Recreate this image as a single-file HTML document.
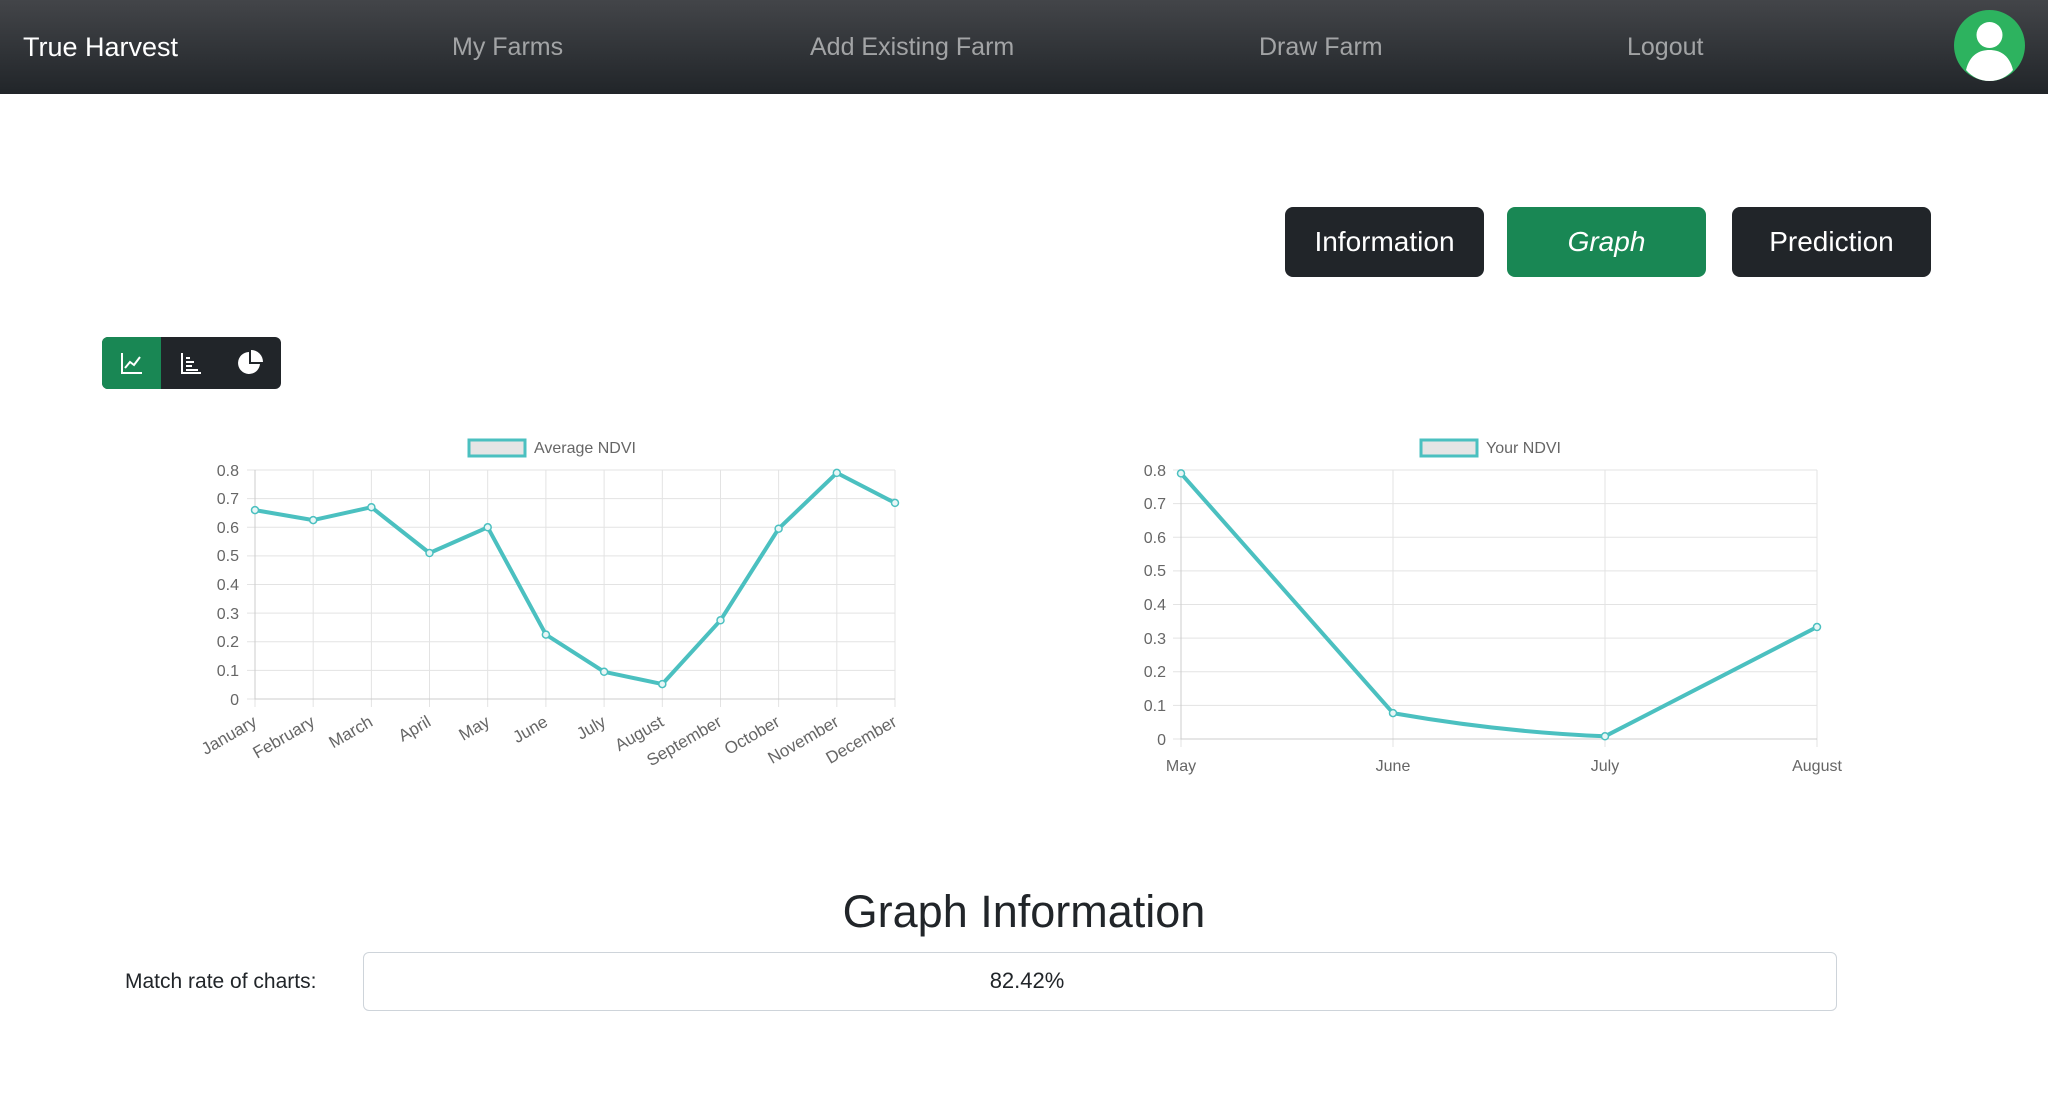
<!DOCTYPE html>
<html><head><meta charset="utf-8"><style>
*{margin:0;padding:0;box-sizing:border-box}
body{width:2048px;height:1104px;background:#fff;font-family:"Liberation Sans",sans-serif;position:relative;overflow:hidden;color:#212529}
.nav{position:absolute;left:0;top:0;width:2048px;height:94px;background:linear-gradient(#434549,#212529)}
.nav span{position:absolute;top:33px;font-size:25px;color:rgba(255,255,255,.55)}
.brand{left:23px;color:#fff!important;font-size:27px!important;top:32px!important}
.btn{position:absolute;top:207px;height:70px;width:199px;border-radius:8px;background:#212529;color:#fff;font-size:28px;display:flex;align-items:center;justify-content:center}
.grp{position:absolute;left:102px;top:337px;width:179px;height:52px;border-radius:6px;background:#212529;overflow:hidden}
.grp div{position:absolute;top:0;width:59px;height:52px;display:flex;align-items:center;justify-content:center}
.lbl{font-size:21px;position:absolute}
</style></head><body>
<div class="nav">
<span class="brand">True Harvest</span>
<span style="left:452px">My Farms</span>
<span style="left:810px">Add Existing Farm</span>
<span style="left:1259px">Draw Farm</span>
<span style="left:1627px">Logout</span>
<svg style="position:absolute;left:1954px;top:10px" width="71" height="71" viewBox="0 0 71 71"><circle cx="35.5" cy="35.5" r="35.5" fill="#2db35f"/><circle cx="35.5" cy="25" r="13" fill="#fff"/><path d="M12 60 C16 44 26 40 35.5 40 C45 40 55 44 59 60 C53 67 45 71 35.5 71 C26 71 18 67 12 60Z" fill="#fff"/></svg>
</div>
<div class="btn" style="left:1285px">Information</div>
<div class="btn" style="left:1507px;background:#198754;font-style:italic">Graph</div>
<div class="btn" style="left:1732px">Prediction</div>
<div class="grp">
<div style="left:0;background:#198754"><svg width="24" height="24" viewBox="0 0 24 24" fill="none" stroke="#fff" stroke-width="2"><path d="M2 2V22H22"/><path d="M5 17L10 11L14 14L20 6"/></svg></div>
<div style="left:59px"><svg width="24" height="24" viewBox="0 0 24 24" fill="none" stroke="#fff" stroke-width="2"><path d="M3 2V22H22"/><path d="M7 7H11M7 11H15M7 15H13M7 19H19"/></svg></div>
<div style="left:118px"><svg width="26" height="26" viewBox="0 0 26 26"><path d="M12 2A11 11 0 1 0 23 14H12Z" fill="#fff"/><path d="M14 0V12H26A12 12 0 0 0 14 0Z" fill="#fff"/></svg></div>
</div>
<svg style="position:absolute;left:0;top:0" width="2048" height="1104" font-family="Liberation Sans" font-size="16" fill="#666">
<g stroke="#e3e3e3" stroke-width="1">
<path d="M247 699H895M247 670.4H895M247 641.75H895M247 613.1H895M247 584.5H895M247 555.9H895M247 527.25H895M247 498.6H895M247 470H895"/>
<path d="M255 470V707M313.2 470V707M371.4 470V707M429.5 470V707M487.7 470V707M545.9 470V707M604.1 470V707M662.3 470V707M720.5 470V707M778.6 470V707M836.8 470V707M895 470V707"/>
<path d="M1173 739H1817M1173 705.4H1817M1173 671.75H1817M1173 638.1H1817M1173 604.5H1817M1173 570.9H1817M1173 537.25H1817M1173 503.6H1817M1173 470H1817"/>
<path d="M1181 470V747M1393 470V747M1605 470V747M1817 470V747"/>
</g>
<path d="M255 470V699H895" stroke="#ccc" fill="none"/>
<path d="M1181 470V739H1817" stroke="#ccc" fill="none"/>
<g text-anchor="end">
<text x="239" y="705">0</text><text x="239" y="676">0.1</text><text x="239" y="647">0.2</text><text x="239" y="619">0.3</text><text x="239" y="590">0.4</text><text x="239" y="561">0.5</text><text x="239" y="533">0.6</text><text x="239" y="504">0.7</text><text x="239" y="476">0.8</text>
<text x="1166" y="745">0</text><text x="1166" y="711">0.1</text><text x="1166" y="677">0.2</text><text x="1166" y="644">0.3</text><text x="1166" y="610">0.4</text><text x="1166" y="576">0.5</text><text x="1166" y="543">0.6</text><text x="1166" y="509">0.7</text><text x="1166" y="476">0.8</text>
<g font-size="17">
<text transform="translate(258,725) rotate(-30)">January</text>
<text transform="translate(316,725) rotate(-30)">February</text>
<text transform="translate(374,725) rotate(-30)">March</text>
<text transform="translate(432,725) rotate(-30)">April</text>
<text transform="translate(491,725) rotate(-30)">May</text>
<text transform="translate(549,725) rotate(-30)">June</text>
<text transform="translate(607,725) rotate(-30)">July</text>
<text transform="translate(665,725) rotate(-30)">August</text>
<text transform="translate(723,725) rotate(-30)">September</text>
<text transform="translate(781,725) rotate(-30)">October</text>
<text transform="translate(840,725) rotate(-30)">November</text>
<text transform="translate(898,725) rotate(-30)">December</text>
</g>
</g>
<g text-anchor="middle"><text x="1181" y="771">May</text><text x="1393" y="771">June</text><text x="1605" y="771">July</text><text x="1817" y="771">August</text></g>
<rect x="469" y="440" width="56" height="16" fill="#e5e5e5" stroke="#4bc0c0" stroke-width="3"/>
<text x="534" y="453">Average NDVI</text>
<rect x="1421" y="440" width="56" height="16" fill="#e5e5e5" stroke="#4bc0c0" stroke-width="3"/>
<text x="1486" y="453">Your NDVI</text>
<g fill="none" stroke="#4bc0c0" stroke-width="4" stroke-linejoin="round">
<path d="M255 510.1L313.2 520.1L371.4 507.2L429.5 553L487.7 527.3L545.9 634.6L604.1 671.8L662.3 684.1L720.5 620.3L778.6 528.7L836.8 472.9L895 502.9"/>
<path d="M1181 473.4L1393 713.1Q1500 732 1605 736.3L1817 627"/>
</g>
<g fill="#e8f6f6" stroke="#4bc0c0" stroke-width="1.5">
<circle cx="255" cy="510.1" r="3.5"/><circle cx="313.2" cy="520.1" r="3.5"/><circle cx="371.4" cy="507.2" r="3.5"/><circle cx="429.5" cy="553" r="3.5"/><circle cx="487.7" cy="527.3" r="3.5"/><circle cx="545.9" cy="634.6" r="3.5"/><circle cx="604.1" cy="671.8" r="3.5"/><circle cx="662.3" cy="684.1" r="3.5"/><circle cx="720.5" cy="620.3" r="3.5"/><circle cx="778.6" cy="528.7" r="3.5"/><circle cx="836.8" cy="472.9" r="3.5"/><circle cx="895" cy="502.9" r="3.5"/>
<circle cx="1181" cy="473.4" r="3.5"/><circle cx="1393" cy="713.1" r="3.5"/><circle cx="1605" cy="736.3" r="3.5"/><circle cx="1817" cy="627" r="3.5"/>
</g>
</svg>
<div style="position:absolute;left:0;width:2048px;top:886px;text-align:center;font-size:45px;font-weight:500">Graph Information</div>
<div class="lbl" style="left:125px;top:970px">Match rate of charts:</div>
<div style="position:absolute;left:363px;top:952px;width:1474px;height:59px;border:1px solid #ced4da;border-radius:6px"></div>
<div style="position:absolute;left:927px;width:200px;top:968px;text-align:center;font-size:22px">82.42%</div>
</body></html>
